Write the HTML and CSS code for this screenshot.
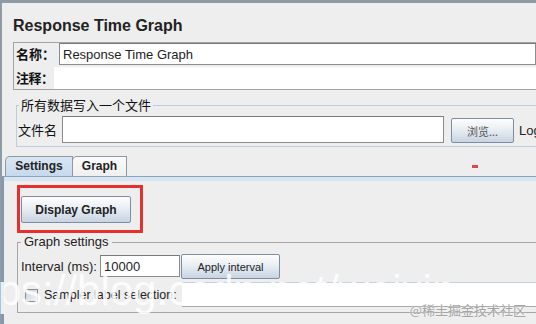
FILE: index.html
```html
<!DOCTYPE html>
<html lang="zh-CN">
<head>
    <meta charset="UTF-8">
    <meta name="viewport" content="width=device-width, initial-scale=1.0">
    <title>Response Time Graph</title>
    <link rel="stylesheet" href="styles.css">
</head>
<body>

    <div class="frame">
        <h1 class="title">Response Time Graph</h1>

        <div class="name-panel">
            <div class="name-row">
                <label class="cjk-label name-label">名称：</label>
                <input type="text" class="text-field name-field" value="Response Time Graph">
            </div>
            <div class="name-row comment-row">
                <label class="cjk-label comment-label">注释：</label>
                <div class="comment-area"></div>
            </div>
        </div>

        <fieldset class="file-group">
            <legend>所有数据写入一个文件</legend>
            <div class="file-row">
                <label class="file-label">文件名</label>
                <input type="text" class="text-field file-field">
                <button class="swing-btn browse-btn">浏览...</button>
                <span class="log-label">Log</span>
            </div>
        </fieldset>

        <div class="tabs">
            <div class="tab tab-active">Settings</div>
            <div class="tab tab-graph">Graph</div>
        </div>

        <div class="tab-panel">
            <div class="tab-band"></div>

            <div class="mark-box">
                <button class="swing-btn display-btn">Display Graph</button>
            </div>

            <fieldset class="graph-settings">
                <legend>Graph settings</legend>
                <div class="settings-row">
                    <label class="interval-label">Interval (ms):</label>
                    <input type="text" class="text-field interval-field" value="10000">
                    <button class="swing-btn apply-btn">Apply interval</button>
                </div>
                <div class="settings-row sampler-row">
                    <span class="checkbox"></span>
                    <label class="sampler-label">Sampler label selection:</label>
                    <div class="sampler-field"></div>
                </div>
            </fieldset>
        </div>
    </div>

    <!-- overlays from the screenshot -->
    <div class="red-dash"></div>
    <div class="url-watermark">https://blog.csdn.net/weixin</div>
    <div class="site-watermark">@稀土掘金技术社区</div>

</body>
</html>
```

FILE: styles.css
```css
html, body {
    margin: 0;
    padding: 0;
    overflow: hidden;
}

body {
    background: #eeeeee;
    font-family: "Liberation Sans", "Noto Sans CJK SC", sans-serif;
    color: #222;
    width: 536px;
    height: 324px;
    position: relative;
}

.frame {
    width: 536px;
    height: 324px;
    box-sizing: border-box;
    overflow: hidden;
    border-top: 3px solid #8e9aa6;
    border-left: 2px solid #8e9aa6;
}

.title {
    margin: 12px 0 5px 11px;
    font-size: 16px;
    line-height: 22px;
    font-weight: bold;
    color: #222;
}

/* name / comment block */
.name-panel {
    margin-left: 11px;
    border: 1px solid #a2a2a2;
    border-right: none;
}

.name-row {
    display: flex;
    height: 22px;
}

.comment-row {
    margin-top: 2px;
}

.cjk-label {
    flex-shrink: 0;
    font-family: "Noto Sans CJK SC", sans-serif;
    font-size: 13px;
    font-weight: bold;
    line-height: 22px;
    padding-left: 2px;
    box-sizing: border-box;
    white-space: nowrap;
    color: #111;
}

.name-label {
    width: 45px;
}

.comment-label {
    width: 40px;
    letter-spacing: -0.5px;
}

.text-field {
    box-sizing: border-box;
    margin: 0;
    border: 1px solid #8c8c8c;
    border-top-color: #7a7a7a;
    background: #fff;
    font-family: "Liberation Sans", sans-serif;
    font-size: 13px;
    color: #222;
    padding: 0 3px;
    outline: none;
}

.name-field {
    flex: 1;
    height: 22px;
}

.comment-area {
    flex: 1;
    background: #fff;
}

/* file group */
.file-group {
    margin: 7px 0 0 14px;
    padding: 3px 0 3px 1px;
    border: 1px solid #bccde0;
    border-right: none;
    min-width: 0;
}

.file-group legend {
    font-family: "Noto Sans CJK SC", sans-serif;
    font-size: 13px;
    line-height: 16px;
    padding: 0 2px;
    margin-left: 1px;
    color: #111;
}

.file-row {
    display: flex;
    align-items: flex-end;
    height: 27px;
}

.file-row > * {
    flex-shrink: 0;
}

.file-label {
    width: 44px;
    font-family: "Noto Sans CJK SC", sans-serif;
    font-size: 13px;
    line-height: 27px;
    color: #111;
}

.file-field {
    width: 382px;
    height: 27px;
}

.swing-btn {
    box-sizing: border-box;
    margin: 0;
    padding: 0;
    border: 1px solid #7d8ea2;
    border-radius: 2px;
    background: linear-gradient(#fdfdfd, #e9eef4 45%, #c8d4e2);
    font-family: "Liberation Sans", sans-serif;
    color: #222;
    cursor: pointer;
}

.browse-btn {
    width: 63px;
    height: 25px;
    margin-left: 7px;
    font-family: "Noto Sans CJK SC", sans-serif;
    font-size: 11px;
    color: #555;
}

.log-label {
    margin-left: 5px;
    font-size: 13px;
    line-height: 25px;
}

/* tabs */
.tabs {
    display: flex;
    margin: 9px 0 0 3px;
    height: 20px;
}

.tab {
    box-sizing: border-box;
    height: 20px;
    border: 1px solid #8e99a5;
    border-bottom: none;
    border-top-left-radius: 5px;
    font-size: 12px;
    font-weight: bold;
    line-height: 19px;
    text-align: center;
    background: linear-gradient(#fafafa, #f0f0f0);
}

.tab-active {
    width: 68px;
    background: linear-gradient(#d9e6f3, #c6d9ec);
}

.tab-graph {
    width: 55px;
    margin-left: -1px;
}

.tab-panel {
    border-top: 1px solid #8aa3bf;
    border-left: 2px solid #8398ae;
    height: 150px;
}

.tab-band {
    height: 4px;
    background: #d8e4f0;
}

/* annotation box around the button */
.mark-box {
    width: 126px;
    height: 48px;
    box-sizing: border-box;
    margin: 4px 0 0 13px;
    border: 3px solid #e5302e;
    padding: 8px 0 0 1px;
}

.display-btn {
    width: 110px;
    height: 27px;
    font-size: 12px;
    font-weight: bold;
}

/* graph settings */
.graph-settings {
    margin: 1px 0 0 13px;
    padding: 4px 0 5px 3px;
    border: 1px solid #a6a6a6;
    border-right: none;
    min-width: 0;
}

.graph-settings legend {
    font-size: 13px;
    line-height: 16px;
    padding: 0 3px;
    margin-left: 0;
    color: #222;
}

.settings-row {
    display: flex;
    align-items: center;
    height: 25px;
}

.settings-row > * {
    flex-shrink: 0;
}

.interval-label {
    width: 79px;
    font-size: 13px;
}

.interval-field {
    width: 80px;
    height: 22px;
    margin-top: 1px;
    align-self: flex-start;
}

.apply-btn {
    width: 99px;
    height: 25px;
    margin-left: 1px;
    font-size: 11px;
}

.sampler-row {
    margin-top: 3px;
}

.checkbox {
    box-sizing: border-box;
    width: 13px;
    height: 13px;
    margin: 2px 0 0 4px;
    border: 1px solid #8a8a8a;
    background: linear-gradient(135deg, #c8d2de, #f4f6f8);
}

.sampler-label {
    width: 138px;
    margin-left: 6px;
    font-size: 12.5px;
    white-space: nowrap;
}

.settings-row .sampler-field {
    flex: 1 1 auto;
    height: 25px;
    box-sizing: border-box;
    background: #fff;
    border-top: 1px solid #c4d3e3;
    border-bottom: 1px solid #a8a8a8;
}

/* overlays */
.red-dash {
    position: absolute;
    left: 472px;
    top: 165px;
    width: 6px;
    height: 3px;
    background: #e2464a;
}

.url-watermark {
    position: absolute;
    left: -49px;
    top: 267px;
    font-size: 42px;
    line-height: 48px;
    color: rgba(255, 255, 255, 0.85);
    white-space: nowrap;
    pointer-events: none;
}

.site-watermark {
    position: absolute;
    right: 10px;
    top: 301px;
    font-family: "Noto Sans CJK SC", sans-serif;
    font-size: 13px;
    line-height: 18px;
    color: #a4a4a4;
    text-shadow: 0 0 2px #fff;
}
```
